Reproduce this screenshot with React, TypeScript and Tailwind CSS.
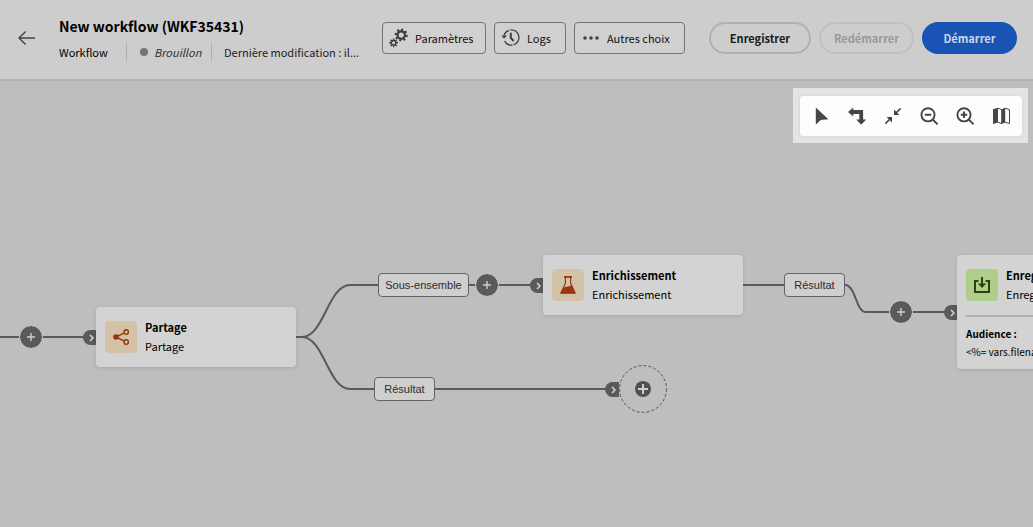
import type { ReactNode } from "react";

function GearsIcon() {
  const teeth = [0, 45, 90, 135, 180, 225, 270, 315];
  return (
    <svg width="20" height="20" viewBox="0 0 20 20" fill="none" stroke="#3f3f3f" aria-hidden="true">
      <g transform="translate(12.2 7)">
        <circle r="3.7" strokeWidth="2.2" />
        {teeth.map((a) => (
          <path key={a} d="M0-4V-6.5" strokeWidth="2.1" transform={`rotate(${a + 10})`} />
        ))}
      </g>
      <g transform="translate(4.6 14.8)">
        <circle r="2.3" strokeWidth="1.5" />
        {teeth.map((a) => (
          <path key={a} d="M0-2.6V-4.4" strokeWidth="1.4" transform={`rotate(${a})`} />
        ))}
      </g>
    </svg>
  );
}

function HistoryIcon() {
  return (
    <svg width="20" height="20" viewBox="0 0 20 20" fill="none" stroke="#3f3f3f" aria-hidden="true">
      <path d="M3 7.4A7.6 7.6 0 0 1 8 2.3" strokeWidth="1.3" />
      <path d="M9.4 2A7.6 7.6 0 0 1 12.6 16.8" strokeWidth="1.3" />
      <path d="M3.6 13A7.6 7.6 0 0 0 11.4 17.1" strokeWidth="1.3" />
      <path d="M.4 7.4H6L3 10.8Z" fill="#3f3f3f" stroke="none" />
      <path d="M9.8 4.8V9.8L12.6 13" strokeWidth="2" />
    </svg>
  );
}

function DotsIcon() {
  return (
    <svg width="20" height="20" viewBox="0 0 20 20" fill="#3f3f3f" aria-hidden="true">
      <circle cx="4" cy="10" r="1.8" />
      <circle cx="10" cy="10" r="1.8" />
      <circle cx="16" cy="10" r="1.8" />
    </svg>
  );
}

function ToolButton({ label, children }: { label: string; children: ReactNode }) {
  return (
    <button type="button" aria-label={label} className="flex size-8 items-center justify-center rounded">
      <svg width="20" height="20" viewBox="0 0 20 20" fill="none" stroke="#464646" aria-hidden="true">
        {children}
      </svg>
    </button>
  );
}

function ActionButton({ icon, className, children }: { icon: ReactNode; className: string; children: ReactNode }) {
  return (
    <button
      type="button"
      className={`flex h-8 items-center gap-1.5 rounded border border-[#747474] bg-[#d0d0d0] pl-1.5 text-[11px] leading-5 whitespace-nowrap text-[#111] ${className}`}
    >
      {icon}
      <span>{children}</span>
    </button>
  );
}

function AddButton({ className }: { className: string }) {
  return (
    <button
      type="button"
      aria-label="Ajouter une activité"
      className={`absolute flex size-[22px] items-center justify-center rounded-full bg-[#5a5a5a] outline outline-[#bebebe] ${className}`}
    >
      <svg width="10" height="10" viewBox="0 0 10 10" stroke="#cfcfcf" strokeWidth="1.4" aria-hidden="true">
        <path d="M5 1V9M1 5H9" />
      </svg>
    </button>
  );
}

function Port({ className }: { className: string }) {
  return (
    <span className={`absolute flex h-[15px] w-[14px] items-center justify-center rounded-l-full bg-[#5a5a5a] pl-1 ${className}`}>
      <svg width="8" height="8" viewBox="0 0 8 8" fill="none" stroke="#d3d3d3" strokeWidth="1.5" aria-hidden="true">
        <path d="M2 1L5 4L2 7" />
      </svg>
    </span>
  );
}

function EdgeLabel({ className, children }: { className: string; children: ReactNode }) {
  return (
    <span
      className={`absolute flex h-6 items-center justify-center rounded border border-[#646464] bg-[#cfcfcf] font-['Liberation_Sans',Arial,sans-serif] text-[11px] leading-4 text-[#2d2d2d] ${className}`}
    >
      {children}
    </span>
  );
}

function ActivityCard({
  title,
  subtitle,
  icon,
  tint,
  className,
  children,
}: {
  title: string;
  subtitle: string;
  icon: ReactNode;
  tint: string;
  className: string;
  children?: ReactNode;
}) {
  return (
    <article className={`absolute w-[200px] rounded bg-[#d3d3d3] shadow-[0_1px_4px_rgba(0,0,0,0.12)] ${className}`}>
      <div className="flex h-[60px] items-center gap-2 px-[9px]">
        <span className={`flex size-8 shrink-0 items-center justify-center rounded ${tint}`}>{icon}</span>
        <div className="text-[11px] leading-[19px] whitespace-nowrap text-black">
          <h2 className="font-bold">{title}</h2>
          <p>{subtitle}</p>
        </div>
      </div>
      {children}
    </article>
  );
}

export default function App() {
  return (
    <div className="flex min-h-screen flex-col overflow-hidden bg-[#bebebe] font-['Noto_Sans_CJK_SC',sans-serif]">
      <header className="flex h-[81px] items-center border-b-2 border-[#b1b1b1] bg-[#cdcdcd] pr-4 pb-1 pl-[18px]">
        <button type="button" aria-label="Retour" className="mr-[23px] shrink-0">
          <svg width="18" height="16" viewBox="0 0 18 16" fill="none" stroke="#444" strokeWidth="1.4" aria-hidden="true">
            <path d="M17 8H1.2M7.6 1.4L1 8L7.6 14.6" />
          </svg>
        </button>
        <div className="shrink-0">
          <h1 className="text-[14px] leading-6 font-bold whitespace-nowrap text-black">New workflow (WKF35431)</h1>
          <div className="mt-1 flex items-center text-[11px] leading-5 whitespace-nowrap text-[#222]">
            <span className="w-[67px] shrink-0 text-black">Workflow</span>
            <span className="h-[18px] w-px shrink-0 bg-[#aeaeae]" />
            <span className="ml-[13px] size-2 shrink-0 rounded-full bg-[#757575]" />
            <span className="ml-1.5 w-[57px] shrink-0 text-[#333] italic">Brouillon</span>
            <span className="h-[18px] w-px shrink-0 bg-[#aeaeae]" />
            <span className="ml-3">Dernière modification : il...</span>
          </div>
        </div>
        <div className="ml-auto flex shrink-0 items-center gap-2">
          <ActionButton icon={<GearsIcon />} className="w-[104px]">Paramètres</ActionButton>
          <ActionButton icon={<HistoryIcon />} className="w-[72px]">Logs</ActionButton>
          <ActionButton icon={<DotsIcon />} className="w-[111px]">Autres choix</ActionButton>
        </div>
        <div className="ml-6 flex shrink-0 items-center gap-2 text-[11px] leading-5 font-bold">
          <button type="button" className="h-8 w-[102px] rounded-full border-2 border-[#b0b0b0] text-[#1b1b1b]">
            Enregistrer
          </button>
          <button type="button" disabled className="h-8 w-[95px] rounded-full border-2 border-[#c0c0c0] text-[#999]">
            Redémarrer
          </button>
          <button type="button" className="h-8 w-[95px] rounded-full bg-[#1953b3] text-[#cfd6e6]">
            Démarrer
          </button>
        </div>
      </header>

      <main className="relative flex-1 overflow-hidden text-black">
        <svg className="absolute top-0 left-0" width="1033" height="446" viewBox="0 81 1033 446" fill="none" stroke="#5a5a5a" strokeWidth="2" aria-hidden="true">
          <path d="M0 337H84M296 337H302C324 337 328 285 350 285H532" />
          <path d="M302 337C324 337 328 389 350 389H606" />
          <path d="M743 285H846C856 287 856 312 866 312H946" />
        </svg>

        <AddButton className="top-[245px] left-[20px]" />
        <Port className="top-[249px] left-[83px]" />
        <ActivityCard
          title="Partage"
          subtitle="Partage"
          tint="bg-[#d4c2a7]"
          className="top-[226px] left-[96px]"
          icon={
            <svg width="18" height="18" viewBox="0 0 18 18" fill="none" stroke="#98380f" strokeWidth="1.4" aria-hidden="true">
              <path d="M4 9L12.4 4.8M4 9L12.4 13.2" />
              <circle cx="4" cy="9" r="2.8" fill="#98380f" stroke="none" />
              <circle cx="14.2" cy="4" r="2.2" />
              <circle cx="14.2" cy="14" r="2.2" />
            </svg>
          }
        />

        <EdgeLabel className="top-[192px] left-[378px] w-[91px]">Sous-ensemble</EdgeLabel>
        <AddButton className="top-[193px] left-[476px]" />
        <Port className="top-[197px] left-[530px]" />
        <ActivityCard
          title="Enrichissement"
          subtitle="Enrichissement"
          tint="bg-[#d4c2a7]"
          className="top-[174px] left-[543px]"
          icon={
            <svg width="18" height="20" viewBox="0 0 18 20" fill="none" aria-hidden="true">
              <path d="M6.4 2V8.4L2 18H16L11.6 8.4V2" stroke="#98380f" strokeWidth="1.2" />
              <path d="M4.6 12.4L13.2 10.4L16.4 17.4Q16.8 18.8 15.4 18.8H2.6Q1.2 18.8 1.6 17.4Z" fill="#98380f" />
              <path d="M5 1H13V2.8H5Z" fill="#98380f" />
            </svg>
          }
        />

        <EdgeLabel className="top-[192px] left-[784px] w-[61px]">Résultat</EdgeLabel>
        <AddButton className="top-[220px] left-[890px]" />
        <Port className="top-[224px] left-[944px]" />
        <ActivityCard
          title="Enregistrement"
          subtitle="Enregistrement"
          tint="bg-[#afce8b]"
          className="top-[174px] left-[957px] h-[114px]"
          icon={
            <svg width="18" height="18" viewBox="0 0 18 18" fill="none" stroke="#30400f" strokeWidth="2" aria-hidden="true">
              <path d="M5.4 5H2V16H16V5H12.6M9 1V9" />
              <path d="M4.8 7.6H13.2L9 12Z" fill="#30400f" stroke="none" />
            </svg>
          }
        >
          <div className="mx-[9px] border-t-2 border-[#b0b0b0] pt-2 text-[10px] leading-[18px] whitespace-nowrap">
            <p className="font-bold">Audience :</p>
            <p>&lt;%= vars.filename %&gt;</p>
          </div>
        </ActivityCard>

        <EdgeLabel className="top-[296px] left-[374px] w-[61px]">Résultat</EdgeLabel>
        <Port className="top-[301px] left-[605px]" />
        <button
          type="button"
          aria-label="Ajouter une activité"
          className="absolute top-[284px] left-[619px] flex size-12 items-center justify-center"
        >
          <svg width="48" height="48" viewBox="0 0 48 48" fill="none" aria-hidden="true">
            <circle cx="24" cy="24" r="23.4" stroke="#555" strokeDasharray="3 2" />
            <circle cx="24" cy="24" r="8" fill="#505050" />
            <path d="M24 19V29M19 24H29" stroke="#cfcfcf" strokeWidth="2" />
          </svg>
        </button>

        <div className="absolute top-[7px] right-[5px] bg-[#e4e4e4] pt-2 pr-1.5 pb-[7px] pl-[7px]">
          <div role="toolbar" aria-label="Outils du canevas" className="flex h-10 items-center gap-1 rounded bg-[#fdfdfd] px-[5px] shadow-[0_0_4px_rgba(0,0,0,0.08)]">
            <ToolButton label="Sélection">
              <path d="M4.8 1.6V18.6L9.8 14L17.4 13.2Z" fill="#464646" stroke="none" />
            </ToolButton>
            <ToolButton label="Changer l'orientation">
              <path d="M4 6H14.2V14" strokeWidth="3.8" />
              <path d="M6.2 1.4V10.6L1 6ZM9.2 13.4H19.2L14.2 18.8Z" fill="#464646" stroke="none" />
            </ToolButton>
            <ToolButton label="Ajuster à l'écran">
              <path d="M17.6 2.4L13 7M2.4 17.6L7 13" strokeWidth="1.6" />
              <path d="M11 3.6V9H16.4ZM9 16.4V11H3.6Z" fill="#464646" stroke="none" />
            </ToolButton>
            <ToolButton label="Zoom arrière">
              <circle cx="9" cy="8.8" r="6.6" strokeWidth="1.9" />
              <path d="M13.6 13.4L18.6 18.4M5.8 8.8H12.2" strokeWidth="2" />
            </ToolButton>
            <ToolButton label="Zoom avant">
              <circle cx="9" cy="8.8" r="6.6" strokeWidth="1.9" />
              <path d="M13.6 13.4L18.6 18.4M5.8 8.8H12.2M9 5.6V12" strokeWidth="2" />
            </ToolButton>
            <ToolButton label="Afficher la carte">
              <path d="M2 3.2L7 1.8V16.6L2 18ZM10.6 3.2L14.2 1.8V16.6L10.6 18Z" fill="#464646" stroke="none" />
              <path d="M7 2.2L10.8 3.6V17.6L7 16.2M14 2.2L18.5 3.6V17.6L14 16.2" />
            </ToolButton>
          </div>
        </div>
      </main>
    </div>
  );
}
